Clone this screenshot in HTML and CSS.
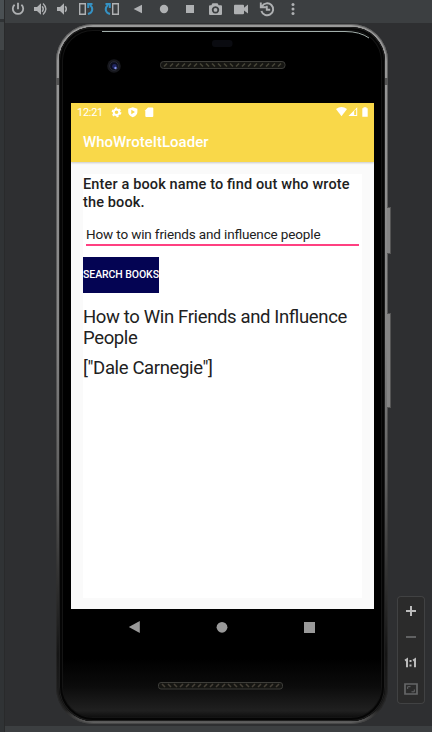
FILE: index.html
```html
<!DOCTYPE html>
<html lang="en">
<head>
<meta charset="utf-8">
<title>Emulator</title>
<link rel="stylesheet" href="styles.css">
</head>
<body>
<div class="window">
  <aside class="gutter"><i class="gutter-tab"></i><i class="gutter-block"></i></aside>
  <div class="panel">
    <header class="toolbar">
      <svg width="427" height="23" viewBox="5 0 427 23" fill="none" stroke="#afb1b3" stroke-width="1.8">
        <path d="M14.6 4.8a5.2 5.2 0 1 0 6.8 0M18 2.8v6.5"/>
        <path d="M34 7h3l4-3.8v11.6L37 11h-3z" fill="#afb1b3" stroke="none"/>
        <path d="M42.2 6.2q2.2 2.8 0 5.6M43 3.6q5.8 5.4 0 10.8" stroke-width="1.4"/>
        <path d="M57 7h3l4-3.8v11.6L60 11h-3z" fill="#afb1b3" stroke="none"/>
        <path d="M65.2 6.3q2.2 2.7 0 5.4" stroke-width="1.5"/>
        <path d="M79.700 3.700h5.600v10.600h-5.600zM112.700 3.700h5.600v10.600h-5.600z" stroke-width="1.400"/>
        <path d="M88 14c5-1.500 5.500-6 2-9M92.500 4h-4.300v4M110 14c-5-1.500-5.500-6-2-9M105.500 4h4.300v4" stroke="#3592c4" stroke-width="2"/>
        <g fill="#afb1b3" stroke="none">
          <path d="M142 4.700v8.600l-8.400-4.300zM186 5h8v8h-8z"/>
          <circle cx="164" cy="9" r="4.200"/>
          <path fill-rule="evenodd" d="M212.500 3.200h5l1.200 2H221q1 0 1 1V14q0 1-1 1h-11q-1 0-1-1V6.200q0-1 1-1h1.300zM215.500 6.200a3.700 3.700 0 1 0 .01 0z"/>
          <circle cx="215.500" cy="9.900" r="1.900"/>
          <path d="M235 4.800h8q1 0 1 1v2l4-3.200v9l-4-3.200v2.800q0 1-1 1h-8q-1 0-1-1V5.800q0-1 1-1z"/>
          <circle cx="293" cy="4.500" r="1.500"/><circle cx="293" cy="9" r="1.500"/><circle cx="293" cy="13.500" r="1.500"/>
        </g>
        <path d="M262 6.200a6 6 0 1 1-.6 4.800M260.800 2.500v4.700h5M266.800 5.700v4h3.400" stroke-width="1.900"/>
      </svg>
    </header>

    <main class="stage">
      <section class="phone">
        <i class="key power"></i><i class="key volume"></i>
        <i class="band left"></i><i class="band right"></i>
        <div class="glass">
          <div class="bezel-top">
            <svg width="326" height="76" viewBox="59 27 326 76">
              <path d="M102 31.500H345q15 0 24 6.500" fill="none" stroke="#a3afab" stroke-width="1"/>
              <circle cx="114" cy="66" r="6.800" fill="#17181d"/><circle cx="114" cy="66" r="4.300" fill="#0b0d1d" stroke="#292b38"/>
              <circle cx="114.500" cy="66.500" r="2.400" fill="#20265f"/><circle cx="115.500" cy="68" r="1.200" fill="#8594ee"/>
              <rect x="212" y="40" width="20.500" height="7" rx="3" fill="#0a0b10"/>
              <rect x="160.500" y="61.500" width="124.500" height="7" rx="3" fill="#151512" stroke="#3d3d39"/>
              <path d="M164 66.500l3-3M170 66.500l3-3M176 66.500l3-3M182 66.500l3-3M188 66.500l3-3M194 66.500l3-3M200 63.500l3 3M206 63.500l3 3M212 63.500l3 3M218 63.500l3 3M224 63.500l3 3M230 63.500l3 3M236 66.500l3-3M242 66.500l3-3M248 66.500l3-3M254 66.500l3-3M260 66.500l3-3M266 66.500l3-3M272 66.500l3-3M278 66.500l3-3" stroke="#454437" stroke-width="1.600"/>
            </svg>
          </div>
          <div class="screen">
            <div class="appbar">
              <div class="status">
                <span class="clock">12:21</span>
                <svg width="260" height="18" viewBox="110 103 260 18" fill="#fff">
                  <circle cx="116.500" cy="112.300" r="2.800" fill="none" stroke="#fff" stroke-width="2"/>
                  <circle cx="116.500" cy="112.300" r="4.200" fill="none" stroke="#fff" stroke-width="1.400" stroke-dasharray="2.200 2.200"/>
                  <path fill-rule="evenodd" d="M132.800 107.300l4.600 1.500v3.300q0 3.400-4.600 5.200q-4.600-1.800-4.600-5.200v-3.300zM131.300 109.800v4.400l3.700-2.200z"/>
                  <path d="M148 107.500h4.300q1 0 1 1v7.500q0 1-1 1h-6q-1 0-1-1v-5.700z"/>
                  <path d="M336 109q5.500-4 11 0L341.500 116.200z"/>
                  <path fill-rule="evenodd" d="M357.200 107.300V116H348.500zM354.200 111v4h2v-6z"/>
                  <path d="M363.500 107.200h3v1h1.200v8.600h-5.400v-8.600h1.200z"/>
                </svg>
              </div>
              <h1 class="title"><span>WhoWroteItLoader</span></h1>
            </div>
            <div class="content">
              <p class="prompt">Enter a book name to find out who wrote<br>the book.</p>
              <div class="field">How to win friends and influence people</div>
              <button class="search">SEARCH BOOKS</button>
              <p class="result book">How to Win Friends and Influence<br>People</p>
              <p class="result author">["Dale Carnegie"]</p>
            </div>
          </div>
          <div class="bezel-bottom">
            <svg width="326" height="112" viewBox="59 609 326 112">
              <g fill="#999"><path d="M139.800 621v12l-11-6z"/><circle cx="222" cy="627.300" r="5.400"/><path d="M304 622h11v11h-11z"/></g>
              <rect x="158.500" y="682.500" width="124" height="6.500" rx="2.500" fill="#151512" stroke="#3d3d39"/>
              <path d="M162 684l3 3M168 684l3 3M174 684l3 3M180 687l3-3M186 687l3-3M192 687l3-3M198 687l3-3M204 687l3-3M210 687l3-3M216 687l3-3M222 687l3-3M228 684l3 3M234 684l3 3M240 684l3 3M246 684l3 3M252 687l3-3M258 687l3-3M264 687l3-3M270 687l3-3M276 687l3-3" stroke="#454037" stroke-width="1.600"/>
            </svg>
          </div>
        </div>
      </section>

      <nav class="zoom">
        <svg width="28" height="108" viewBox="397 596 28 108" fill="none">
          <path d="M406 611h10M411 606v10" stroke="#bbb" stroke-width="2"/>
          <path d="M406 637h10" stroke="#606162" stroke-width="2"/>
          <path d="M405 660.500l2-1.200v8M413 660.500l2-1.200v8" stroke="#bbb" stroke-width="2"/>
          <path d="M409.500 660h2v2h-2zM409.500 664.500h2v2h-2z" fill="#bbb"/>
          <path d="M405 684h12v10h-12z" stroke="#666768" stroke-width="1.700"/>
          <path d="M407.700 689v-2.300h2.800M414.300 689.500v2.300h-2.800" stroke="#666768" stroke-width="1"/>
        </svg>
      </nav>
    </main>
    <footer class="bottom"></footer>
  </div>
</div>
</body>
</html>
```
FILE: styles.css
```css
* { box-sizing: border-box; }
body { margin: 0; font-family: Roboto, "Liberation Sans", sans-serif; background: #2e2f31; }
svg { display: block; }
p, h1 { margin: 0; }
.window { display: grid; grid-template-columns: 5px 427px; width: 432px; height: 732px; overflow: hidden; }
.gutter { background: #303335; border-right: 1px solid #292a2b; display: flex; flex-direction: column; }
.gutter-tab { height: 19px; background: #4a5053; margin-bottom: 3px; }
.gutter-block { height: 28px; background: #414547; }
.panel { display: grid; grid-template-rows: 23px 703px 6px; }
.toolbar { background: #3c3f41; }
.bottom { background: #3c3f41; }
.stage { position: relative; background: #2e2f31; padding: 1px 0 0 51px; }
.phone {
  position: relative; width: 332px; height: 700px; padding: 3px;
  border-radius: 37px;
  background: linear-gradient(#999, #858585 45%, #606060 65%, #353535 78%, #151515 90%, #202020 98%, #666);
  box-shadow: inset 0 0 0 1px #30303080;
}
.key { position: absolute; left: 331px; width: 4px; background: #858585; border: 1px solid #555; border-left: 0; }
.power { top: 183px; height: 47px; }
.volume { top: 289px; height: 95px; }
.band { position: absolute; top: 54px; width: 3px; height: 7px; background: #555; }
.left { left: 0; }
.right { right: 0; }
.glass {
  height: 694px; border-radius: 34px; overflow: hidden; position: relative;
  background: linear-gradient(#000 0 91%, #0b0b0b 95%, #202020 98.500%, #050505);
  box-shadow: inset 0 0 0 1px #1e1e1e, inset 0 0 0 3px #050505, inset 0 0 0 4px #141414;
}
.bezel-top { height: 76px; }
.screen { margin-left: 12px; width: 303px; height: 506px; background: #fafafa; }
.appbar { height: 59px; background: #f9d849; box-shadow: 0 1px 2px #0003; color: #fff; }
.status { height: 18px; display: flex; padding-left: 6px; }
.clock { width: 33px; font-size: 11px; line-height: 19px; letter-spacing: -.3px; }
.title { padding: 10px 0 0 12px; font-size: 15px; line-height: 22px; font-weight: 500; }
.content { margin: 12px; width: 279px; height: 424px; background: #fff; color: #212121; white-space: nowrap; font-feature-settings: "liga" 1; }
.prompt { padding-top: 2px; font-size: 14.500px; line-height: 17.500px; font-weight: 500; letter-spacing: .14px; }
.field { margin: 11px 3px 0 3px; height: 24px; border-bottom: 2px solid #ff4081; font-size: 13.500px; line-height: 25px; letter-spacing: -.14px; }
.search { display: block; margin-top: 11px; padding: 0; width: 76px; height: 36px; border: 0; background: #040453; color: #fff; font: 500 10.500px/36px Roboto, sans-serif; letter-spacing: -.08px; }
.book { margin-top: 14px; font-size: 18.500px; line-height: 20.500px; letter-spacing: -.36px; }
.author { margin-top: 9px; font-size: 18.500px; line-height: 22px; letter-spacing: -.36px; }
.zoom { position: absolute; left: 392px; top: 573px; width: 28px; height: 108px; border-radius: 4px; background: #2b2b2b; box-shadow: inset 0 0 0 1px #414243; }
```
